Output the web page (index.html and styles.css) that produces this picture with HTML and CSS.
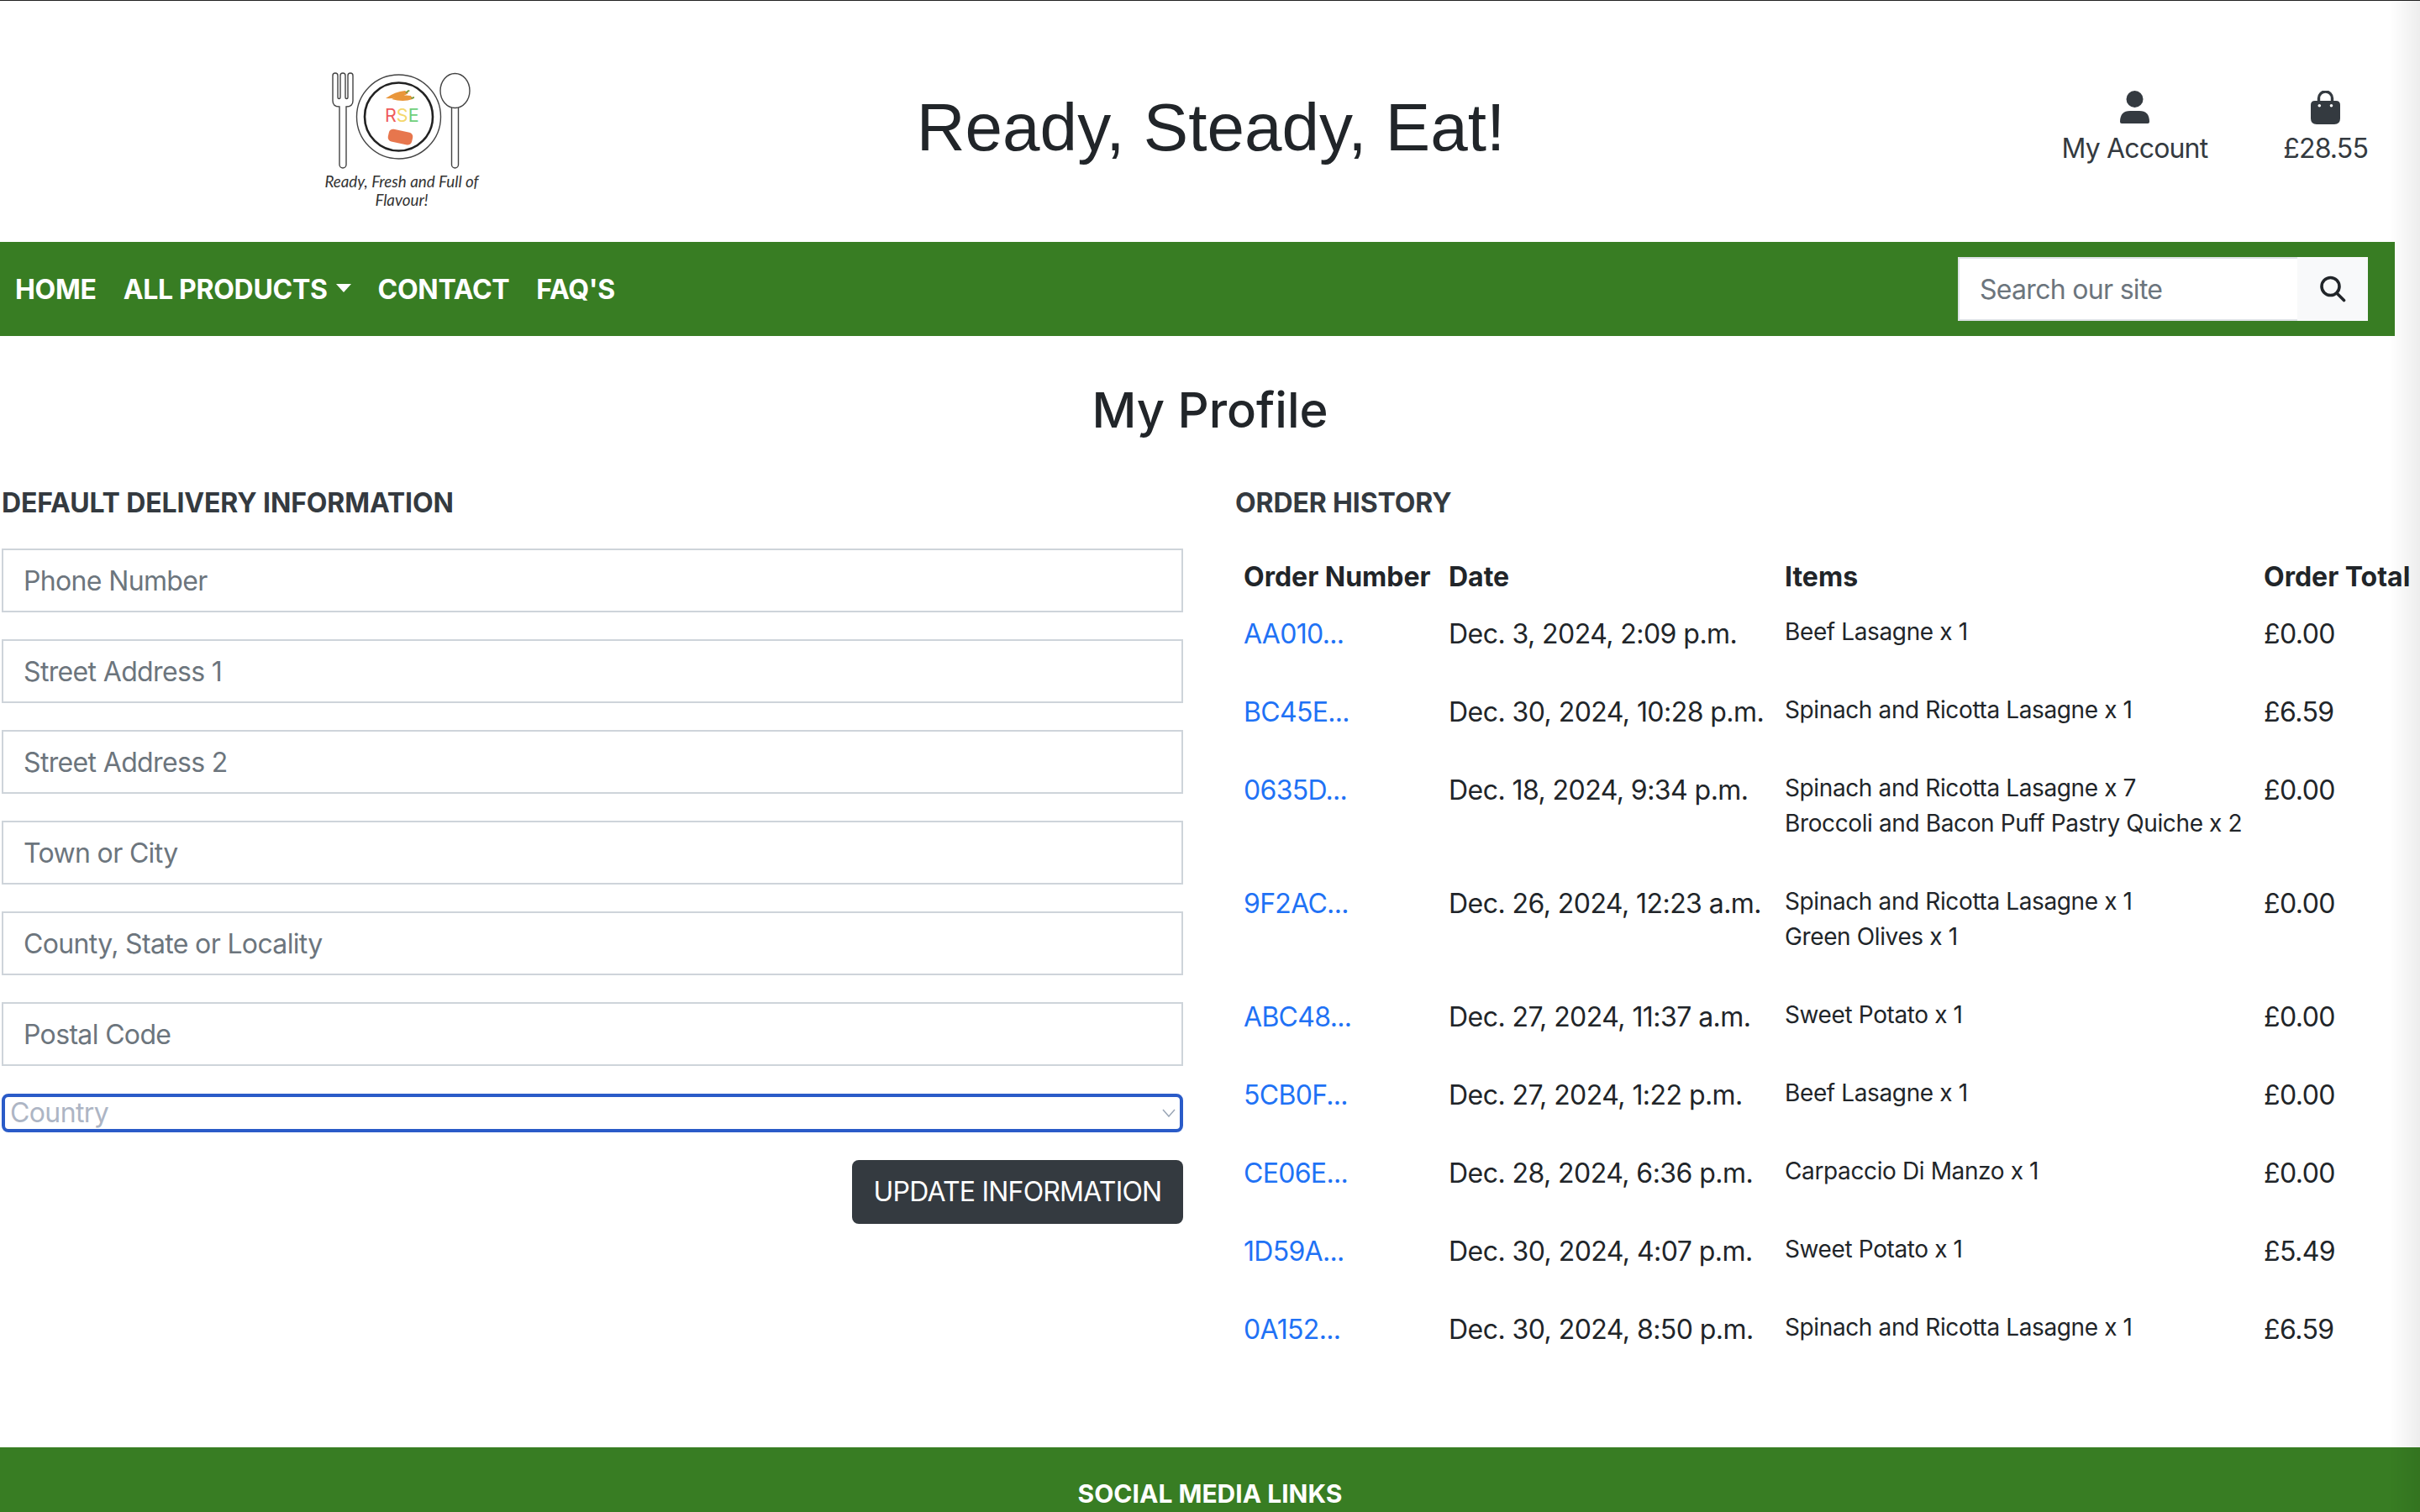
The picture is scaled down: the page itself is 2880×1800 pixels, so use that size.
FILE: index.html
```html
<!DOCTYPE html>
<html lang="en">
<head>
<meta charset="utf-8">
<title>Ready, Steady, Eat!</title>
<link rel="stylesheet" href="styles.css">
</head>
<body>
<header class="site-header">
  <div class="logo-col">
    <svg class="logo" viewBox="380 80 200 170" width="200" height="170" role="img" aria-label="Logo">
      <g class="line">
        <path d="M396 90A3 3 0 0 1 402 90V116A1.5 1.5 0 0 0 405 116V90A3 3 0 0 1 411 90V116A1.5 1.5 0 0 0 414 116V90A3 3 0 0 1 420 90V120Q420 127 412 127V196A4 4 0 0 1 404 196V127Q396 127 396 120Z"/>
        <circle cx="474.5" cy="139" r="50"/>
        <ellipse cx="541.5" cy="108" rx="17.5" ry="20.5"/>
        <path d="M537.5 128V196A4 4 0 0 0 545.5 196V128"/>
      </g>
      <circle class="plate-inner" cx="474.5" cy="139" r="40.5"/>
      <path class="carrot" d="M459 117Q470 109 482 108L486 111Q476 118 459 117Z"/>
      <path class="carrot" d="M466 118Q478 112 489 114L491 118Q480 122 466 118Z"/>
      <path class="leaf" d="M482 110L486 107L488 108L484 111ZM489 116L493 115L493 117L490 118Z"/>
      <text class="rse" x="458" y="145"><tspan class="r">R</tspan><tspan class="s">S</tspan><tspan class="e">E</tspan></text>
      <rect class="meat" x="462" y="155.500" width="29" height="15" rx="5" transform="rotate(12 476 163)"/>
      <text class="tag" x="478" y="223" text-anchor="middle">Ready, Fresh and Full of</text>
      <text class="tag" x="478" y="245" text-anchor="middle">Flavour!</text>
    </svg>
  </div>
  <div class="title-col"><div class="site-title">Ready, Steady, Eat!</div></div>
  <div class="account-col">
    <a class="account-link" href="#">
      <svg class="icon-user" viewBox="0 0 35 40" width="35" height="40"><circle cx="17.5" cy="10" r="10"/><path d="M0 37Q0 24 12 24H23Q35 24 35 37Q35 39 33 39H2Q0 39 0 37Z"/></svg>
      <span>My Account</span>
    </a>
    <a class="account-link" href="#">
      <svg class="icon-bag" viewBox="0 0 35 40" width="35" height="40"><path class="bag-handle" d="M9.5 14V9A8 8 0 0 1 25.500 9V14"/><path d="M5 12H30Q35 12 35 17V33Q35 40 28 40H7Q0 40 0 33V17Q0 12 5 12Z"/><circle class="bag-dot" cx="10.300" cy="17.700" r="1.800"/><circle class="bag-dot" cx="24.500" cy="17.700" r="1.800"/></svg>
      <span>£28.55</span>
    </a>
  </div>
</header>

<nav class="main-nav">
  <ul class="nav-links">
    <li><a href="#">Home</a></li>
    <li><a href="#" class="has-caret">All Products</a></li>
    <li><a href="#">Contact</a></li>
    <li><a href="#">FAQ's</a></li>
  </ul>
  <form class="search">
    <input class="search-input" type="text" placeholder="Search our site">
    <button class="search-btn" type="button" aria-label="Search">
      <svg viewBox="0 0 32 32" width="32" height="32"><circle cx="13.500" cy="13" r="10.500"/><path d="M21 21L29.500 29.500"/></svg>
    </button>
  </form>
</nav>

<main class="profile">
  <h1 class="page-title">My Profile</h1>
  <div class="columns">
    <section>
      <h2 class="section-title">Default Delivery Information</h2>
      <form class="delivery-form">
        <input class="field" type="text" placeholder="Phone Number">
        <input class="field" type="text" placeholder="Street Address 1">
        <input class="field" type="text" placeholder="Street Address 2">
        <input class="field" type="text" placeholder="Town or City">
        <input class="field" type="text" placeholder="County, State or Locality">
        <input class="field" type="text" placeholder="Postal Code">
        <div class="select-wrap">
          <select class="country"><option>Country</option></select>
          <svg class="chevron" viewBox="0 0 18 10" width="18" height="10"><path d="M2 1L9 9L16 1"/></svg>
        </div>
        <div class="form-actions"><button class="update-btn" type="button">Update Information</button></div>
      </form>
    </section>
    <section>
      <h2 class="section-title">Order History</h2>
      <table class="orders">
        <colgroup><col class="c-num"><col class="c-date"><col class="c-items"><col class="c-total"></colgroup>
        <thead>
          <tr><th>Order Number</th><th>Date</th><th>Items</th><th>Order Total</th></tr>
        </thead>
        <tbody>
          <tr><td><a href="#">AA010...</a></td><td>Dec. 3, 2024, 2:09 p.m.</td><td class="items"><p>Beef Lasagne x 1</p></td><td>£0.00</td></tr>
          <tr><td><a href="#">BC45E...</a></td><td>Dec. 30, 2024, 10:28 p.m.</td><td class="items"><p>Spinach and Ricotta Lasagne x 1</p></td><td>£6.59</td></tr>
          <tr><td><a href="#">0635D...</a></td><td>Dec. 18, 2024, 9:34 p.m.</td><td class="items"><p>Spinach and Ricotta Lasagne x 7</p><p>Broccoli and Bacon Puff Pastry Quiche x 2</p></td><td>£0.00</td></tr>
          <tr><td><a href="#">9F2AC...</a></td><td>Dec. 26, 2024, 12:23 a.m.</td><td class="items"><p>Spinach and Ricotta Lasagne x 1</p><p>Green Olives x 1</p></td><td>£0.00</td></tr>
          <tr><td><a href="#">ABC48...</a></td><td>Dec. 27, 2024, 11:37 a.m.</td><td class="items"><p>Sweet Potato x 1</p></td><td>£0.00</td></tr>
          <tr><td><a href="#">5CB0F...</a></td><td>Dec. 27, 2024, 1:22 p.m.</td><td class="items"><p>Beef Lasagne x 1</p></td><td>£0.00</td></tr>
          <tr><td><a href="#">CE06E...</a></td><td>Dec. 28, 2024, 6:36 p.m.</td><td class="items"><p>Carpaccio Di Manzo x 1</p></td><td>£0.00</td></tr>
          <tr><td><a href="#">1D59A...</a></td><td>Dec. 30, 2024, 4:07 p.m.</td><td class="items"><p>Sweet Potato x 1</p></td><td>£5.49</td></tr>
          <tr><td><a href="#">0A152...</a></td><td>Dec. 30, 2024, 8:50 p.m.</td><td class="items"><p>Spinach and Ricotta Lasagne x 1</p></td><td>£6.59</td></tr>
        </tbody>
      </table>
    </section>
  </div>
</main>

<footer class="site-footer"><h3 class="footer-title">Social Media Links</h3></footer>
<div class="scroll-fade"></div>
</body>
</html>
```

FILE: styles.css
```css
* { box-sizing: border-box; }
html, body { height: 1800px; overflow: hidden; }
body {
  margin: 0;
  width: 2880px;
  font-family: Inter, "Liberation Sans", sans-serif;
  font-size: 32px;
  line-height: 48px;
  color: #212529;
  background: #fff;
}
a { text-decoration: none; color: inherit; }

.site-header {
  height: 288px;
  border-top: 1px solid #222;
  display: grid;
  grid-template-columns: 960px 960px 960px;
}
.logo-col { display: flex; justify-content: center; padding-top: 79px; }
.logo { display: block; }
.line { fill: none; stroke: #444; stroke-width: 1.4; }
.plate-inner { fill: none; stroke: #222; stroke-width: 2.6; }
.carrot { fill: #e9963a; }
.leaf { fill: #7c9a3c; }
.rse { font-family: Inter, sans-serif; font-size: 21.5px; }
.r { fill: #ef5b5b; }
.s { fill: #f4d76c; }
.e { fill: #6fcf7a; }
.meat { fill: #e7764d; }
.tag { font-family: Lato, sans-serif; font-style: italic; font-size: 18.8px; fill: #333; }

.title-col { display: flex; justify-content: center; align-items: flex-start; padding: 105px 0 0 2px; }
.site-title { font-family: "Liberation Sans", Arial, sans-serif; font-size: 80px; line-height: 92px; letter-spacing: 0.05px; white-space: nowrap; color: #212529; }

.account-col { display: flex; justify-content: flex-end; gap: 90px; padding: 107px 62px 0 0; }
.account-link { display: flex; flex-direction: column; align-items: center; color: #343a40; letter-spacing: -0.85px; }
.account-link svg { display: block; fill: #343a40; margin-bottom: 5px; }
.bag-handle { fill: none; stroke: #343a40; stroke-width: 3.4; }
.account-col .bag-dot { fill: #fff; }

.main-nav {
  width: 2850px;
  height: 112px;
  background: #387d23;
  display: flex;
  justify-content: space-between;
  align-items: center;
  padding: 0 32px 0 2px;
}
.nav-links { display: flex; list-style: none; margin: 0; padding: 2px 0 0; }
.nav-links a {
  display: block;
  padding: 0 16px;
  color: #fff;
  font-weight: 700;
  letter-spacing: -0.3px;
  text-transform: uppercase;
  white-space: nowrap;
}
.has-caret::after {
  content: "";
  display: inline-block;
  margin-left: 10px;
  vertical-align: 8px;
  border-top: 10px solid #fff;
  border-left: 9px solid transparent;
  border-right: 9px solid transparent;
}
.search { display: flex; height: 76px; width: 488px; }
.search-input {
  flex: 1;
  min-width: 0;
  height: 76px;
  border: 2px solid #dee2e6;
  border-right: 0;
  border-radius: 0;
  padding: 0 24px;
  font: inherit;
  letter-spacing: -0.7px;
  background: #fff;
  outline: none;
}
.search-input::placeholder, .field::placeholder { color: #6c757d; opacity: 1; }
.search-btn {
  width: 84px;
  border: 0;
  background: #f8f9fa;
  padding: 0;
  display: flex;
  align-items: center;
  justify-content: center;
}
.search-btn svg { fill: none; stroke: #212529; stroke-width: 3.6; stroke-linecap: round; }

.page-title {
  margin: 50px 0 0;
  text-align: center;
  font-size: 58px;
  line-height: 77px;
  font-weight: 500;
}
.columns {
  display: grid;
  grid-template-columns: 1406px 1410px;
  column-gap: 62px;
  padding-left: 2px;
  margin-top: 48px;
}
.section-title {
  margin: 0;
  font-size: 32px;
  line-height: 48px;
  font-weight: 700;
  letter-spacing: -0.13px;
  color: #343a40;
  text-transform: uppercase;
}
.delivery-form { margin-top: 30px; display: flex; flex-direction: column; gap: 32px; }
.field {
  width: 100%;
  height: 76px;
  border: 2px solid #ced4da;
  padding: 0 24px;
  font: inherit;
  letter-spacing: -0.65px;
  outline: none;
  border-radius: 0;
}
.select-wrap { position: relative; margin-top: 1px; }
.country {
  display: block;
  width: 100%;
  height: 46px;
  padding: 0 6px;
  border: 4px solid #2a5bc8;
  border-radius: 8px;
  background: #fff;
  font: inherit;
  letter-spacing: -0.6px;
  line-height: 38px;
  color: #adb5c4;
  appearance: none;
  outline: none;
}
.chevron { position: absolute; right: 8px; top: 18px; fill: none; stroke: #9aa6b6; stroke-width: 1.5; }
.form-actions { display: flex; justify-content: flex-end; margin-top: 1px; }
.update-btn {
  height: 76px;
  width: 394px;
  padding: 0;
  border: 0;
  border-radius: 8px;
  background: #343a40;
  color: #fff;
  font: inherit;
  letter-spacing: -0.8px;
  text-transform: uppercase;
}

.orders { margin-top: 32px; width: 1410px; table-layout: fixed; border-collapse: collapse; }
.c-num { width: 244px; }
.c-date { width: 400px; }
.c-items { width: 570px; }
.c-total { width: 196px; }
.orders th {
  text-align: left;
  padding: 8px 10px 12px;
  font-weight: 700;
  white-space: nowrap;
}
.orders td {
  vertical-align: top;
  padding: 8px 10px 37px;
  letter-spacing: -0.55px;
  white-space: nowrap;
}
.orders td a { color: #1f72f5; letter-spacing: -0.7px; }
.orders .items { padding-bottom: 43px; font-size: 28px; line-height: 42px; letter-spacing: -0.38px; }
.items p { margin: 0; }

.site-footer {
  margin-top: 79px;
  background: #387d23;
  padding-top: 31px;
  height: 100px;
}
.footer-title {
  margin: 0;
  text-align: center;
  font-size: 30px;
  line-height: 48px;
  font-weight: 700;
  color: #fff;
  text-transform: uppercase;
}
.scroll-fade {
  position: fixed;
  top: 0;
  right: 0;
  bottom: 0;
  width: 36px;
  background: linear-gradient(to right, rgba(0,0,0,0), rgba(0,0,0,.07));
  pointer-events: none;
}
```
